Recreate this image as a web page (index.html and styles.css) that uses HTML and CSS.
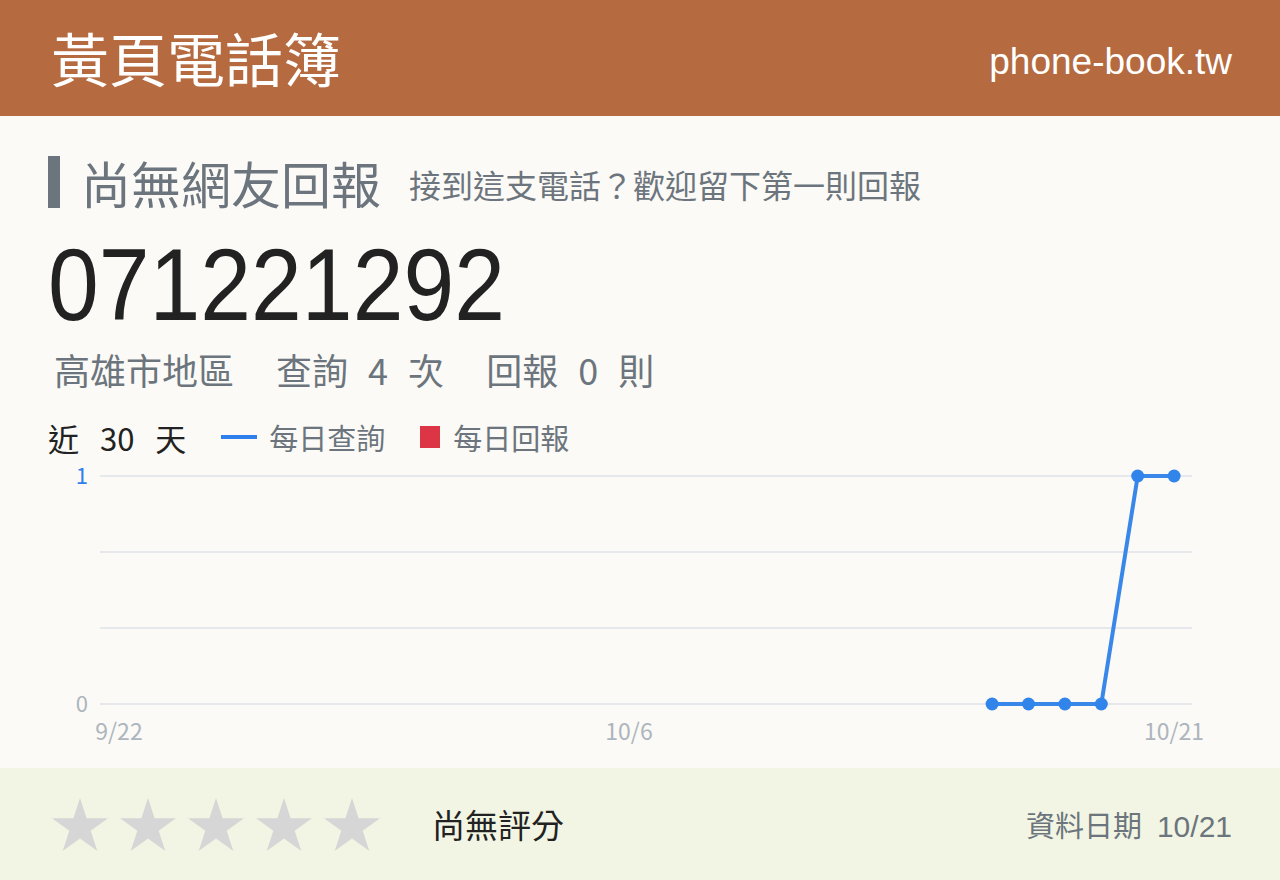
FILE: index.html
```html
<!DOCTYPE html>
<html lang="zh-Hant">
<head>
<meta charset="utf-8">
<title>071221292 - 黃頁電話簿</title>
<link rel="stylesheet" href="styles.css">
</head>
<body>
<header class="topbar">
  <div class="brand">黃頁電話簿</div>
  <div class="site">phone-book.tw</div>
</header>

<main class="content">
  <div class="status">
    <span class="status-bar"></span>
    <h1 class="status-title">尚無網友回報</h1>
    <span class="status-hint">接到這支電話？歡迎留下第一則回報</span>
  </div>

  <div class="number"><span class="digits">071221292</span></div>

  <div class="stats">
    <span>高雄市地區</span>
    <span>查詢 4 次</span>
    <span>回報 0 則</span>
  </div>

  <div class="legend">
    <span class="range">近 30 天</span>
    <span class="key"><i class="key-line"></i>每日查詢</span>
    <span class="key"><i class="key-box"></i>每日回報</span>
  </div>

  <svg class="chart" width="1184" height="308" viewBox="0 0 1184 308">
    <g class="grid">
      <line x1="52" y1="16" x2="1144" y2="16"/>
      <line x1="52" y1="92" x2="1144" y2="92"/>
      <line x1="52" y1="168" x2="1144" y2="168"/>
      <line x1="52" y1="244" x2="1144" y2="244"/>
    </g>
    <text class="y-label y-max" x="40" y="24" text-anchor="end">1</text>
    <text class="y-label" x="40" y="252" text-anchor="end">0</text>
    <text class="x-label" x="71" y="280" text-anchor="middle">9/22</text>
    <text class="x-label" x="581" y="280" text-anchor="middle">10/6</text>
    <text class="x-label" x="1126" y="280" text-anchor="middle">10/21</text>
    <polyline class="series" points="944.1,244 980.5,244 1016.9,244 1053.3,244 1089.7,16 1126.1,16"/>
    <g class="dots">
      <circle cx="944.1" cy="244" r="6.5"/>
      <circle cx="980.5" cy="244" r="6.5"/>
      <circle cx="1016.9" cy="244" r="6.5"/>
      <circle cx="1053.3" cy="244" r="6.5"/>
      <circle cx="1089.7" cy="16" r="6.5"/>
      <circle cx="1126.1" cy="16" r="6.5"/>
    </g>
  </svg>
</main>

<footer class="footbar">
  <div class="stars">
    <svg class="star" viewBox="0 0 56 53"><polygon points="28,0 34.6,20.2 56,20.2 38.7,32.8 45.3,53 28,40.5 10.7,53 17.3,32.8 0,20.2 21.4,20.2"/></svg>
    <svg class="star" viewBox="0 0 56 53"><polygon points="28,0 34.6,20.2 56,20.2 38.7,32.8 45.3,53 28,40.5 10.7,53 17.3,32.8 0,20.2 21.4,20.2"/></svg>
    <svg class="star" viewBox="0 0 56 53"><polygon points="28,0 34.6,20.2 56,20.2 38.7,32.8 45.3,53 28,40.5 10.7,53 17.3,32.8 0,20.2 21.4,20.2"/></svg>
    <svg class="star" viewBox="0 0 56 53"><polygon points="28,0 34.6,20.2 56,20.2 38.7,32.8 45.3,53 28,40.5 10.7,53 17.3,32.8 0,20.2 21.4,20.2"/></svg>
    <svg class="star" viewBox="0 0 56 53"><polygon points="28,0 34.6,20.2 56,20.2 38.7,32.8 45.3,53 28,40.5 10.7,53 17.3,32.8 0,20.2 21.4,20.2"/></svg>
  </div>
  <div class="rating">尚無評分</div>
  <div class="updated"><span class="updated-label">資料日期</span><span class="updated-date">10/21</span></div>
</footer>
</body>
</html>
```

FILE: styles.css
```css
* {
  box-sizing: border-box;
}

html, body {
  margin: 0;
  padding: 0;
}

body {
  width: 1280px;
  height: 880px;
  display: flex;
  flex-direction: column;
  background: #fbfaf6;
  font-family: "Noto Sans CJK TC", "Noto Sans", sans-serif;
  color: #222;
  overflow: hidden;
}

/* top brand bar */
.topbar {
  height: 116px;
  flex: none;
  display: flex;
  align-items: center;
  justify-content: space-between;
  padding: 0 48px 0 51px;
  background: #b56a40;
  color: #fff;
}

.brand {
  font-size: 58px;
  line-height: 1;
  margin-top: -2px;
}

.site {
  font-family: "Liberation Sans", Arial, sans-serif;
  font-size: 37px;
  line-height: 1;
  margin-top: 6px;
}

/* main card */
.content {
  flex: 1;
  padding: 38px 48px 0 48px;
}

.status {
  display: flex;
  align-items: center;
  height: 56px;
}

.status-bar {
  width: 12px;
  height: 52px;
  background: #6c757d;
  margin-right: 21px;
}

.status-title {
  margin: 0;
  font-size: 50px;
  font-weight: 400;
  line-height: 1;
  color: #6c757d;
  margin-right: 28px;
}

.status-hint {
  font-size: 32px;
  line-height: 1;
  color: #6c757d;
  margin-top: 4px;
}

.number {
  font-family: "Liberation Sans", Arial, sans-serif;
  font-size: 102px;
  line-height: 1;
  color: #222;
  margin-top: 24px;
  height: 102px;
}

.digits {
  display: inline-block;
  transform: scaleX(0.895);
  transform-origin: 0 0;
}

.stats {
  display: flex;
  gap: 42px;
  font-size: 36px;
  line-height: 1;
  color: #6c757d;
  margin-top: 15px;
  padding-left: 6px;
}

.stats span {
  word-spacing: 12px;
}

.legend {
  display: flex;
  align-items: center;
  margin-top: 32px;
  height: 36px;
}

.range {
  font-size: 31px;
  line-height: 1;
  color: #222;
  word-spacing: 14px;
  margin-right: 35px;
}

.key {
  display: flex;
  align-items: center;
  font-size: 29px;
  line-height: 1;
  color: #6c757d;
  margin-right: 35px;
}

.key-line {
  display: block;
  width: 36px;
  height: 4px;
  background: #2f80ed;
  margin-right: 12px;
}

.key-box {
  display: block;
  width: 20px;
  height: 22px;
  background: #dc3545;
  margin-right: 13px;
}

/* trend chart */
.chart {
  display: block;
  margin-top: 5px;
  overflow: visible;
}

.grid line {
  stroke: #e6e8ec;
  stroke-width: 2;
}

.y-label {
  font-size: 22px;
  fill: #adb5bd;
}

.y-label.y-max {
  fill: #2f80ed;
}

.x-label {
  font-size: 23px;
  fill: #adb5bd;
}

.series {
  fill: none;
  stroke: #3a87ea;
  stroke-width: 4;
  stroke-linejoin: round;
}

.dots circle {
  fill: #3084ea;
}

/* rating footer */
.footbar {
  height: 112px;
  flex: none;
  display: flex;
  align-items: center;
  padding: 0 48px 0 52px;
  background: #f2f5e3;
}

.stars {
  display: flex;
  gap: 12px;
  margin-right: 52px;
}

.star {
  width: 56px;
  height: 53px;
  display: block;
}

.star polygon {
  fill: #d6d6d6;
}

.rating {
  font-size: 33px;
  line-height: 1;
  color: #222;
}

.updated {
  margin-left: auto;
  display: flex;
  align-items: baseline;
  color: #6c757d;
}

.updated-label {
  font-size: 29px;
  margin-right: 15px;
}

.updated-date {
  font-family: "Liberation Sans", Arial, sans-serif;
  font-size: 30px;
}
```
